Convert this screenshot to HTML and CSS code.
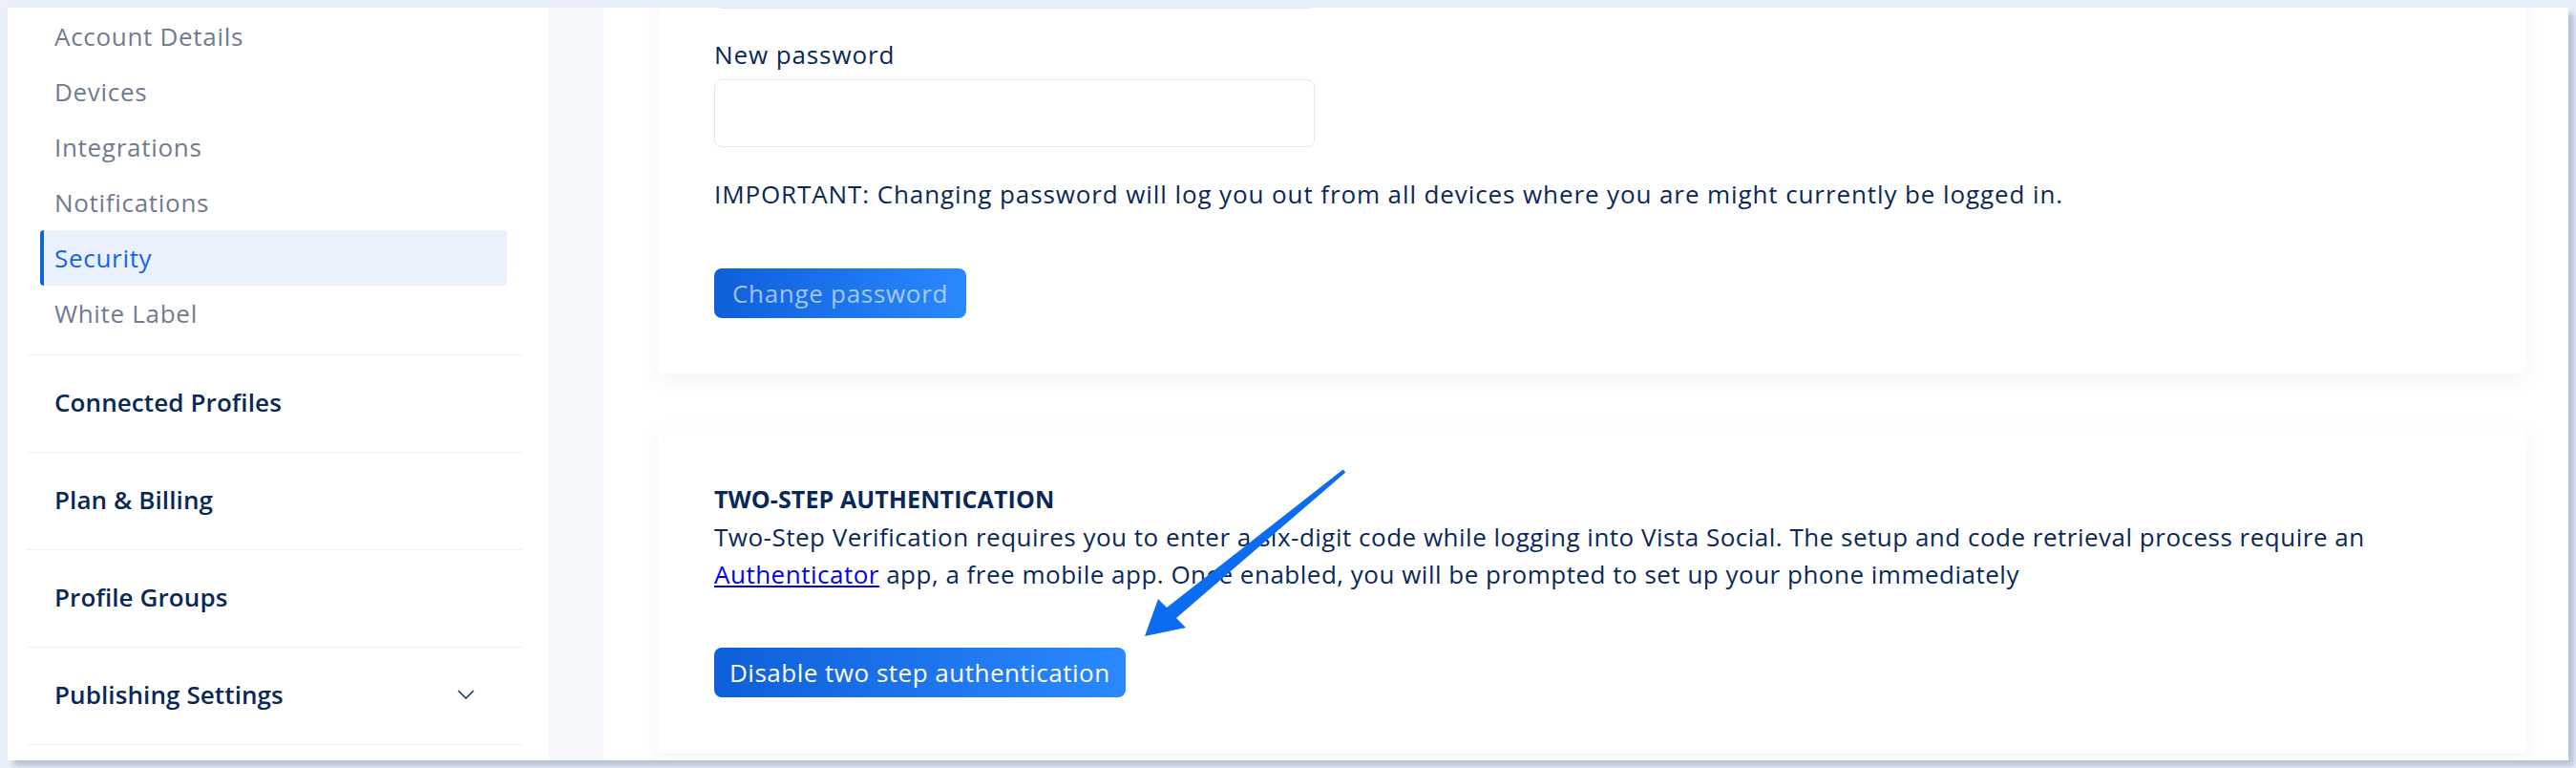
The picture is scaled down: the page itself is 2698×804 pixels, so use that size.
FILE: index.html
```html
<!DOCTYPE html>
<html lang="en">
<head>
    <meta charset="UTF-8">
    <meta name="viewport" content="width=device-width, initial-scale=1.0">
    <title>Settings - Security</title>
    <link rel="stylesheet" href="styles.css">
</head>
<body>

    <div class="window">
        <aside class="sidebar">
            <div class="submenu">
                <ul class="submenu-list">
                    <li class="submenu-item">Account Details</li>
                    <li class="submenu-item">Devices</li>
                    <li class="submenu-item">Integrations</li>
                    <li class="submenu-item">Notifications</li>
                    <li class="submenu-item active">Security</li>
                    <li class="submenu-item">White Label</li>
                </ul>
            </div>
            <div class="section">Connected Profiles</div>
            <div class="section">Plan &amp; Billing</div>
            <div class="section">Profile Groups</div>
            <div class="section">
                <span>Publishing Settings</span>
                <svg class="chevron" width="18" height="10" viewBox="0 0 18 10">
                    <path d="M1 1 L9 9 L17 1" fill="none" stroke="#1c3a72" stroke-width="1.6"/>
                </svg>
            </div>
        </aside>

        <div class="gutter"></div>

        <main class="content">
            <section class="card card-password">
                <input class="field field-cut" type="password">
                <label class="field-label" for="newPassword">New password</label>
                <input class="field" id="newPassword" type="password">
                <p class="note">IMPORTANT: Changing password will log you out from all devices where you are might currently be logged in.</p>
                <button class="btn" type="button" disabled>Change password</button>
            </section>

            <section class="card card-twostep">
                <h3 class="card-title">TWO-STEP AUTHENTICATION</h3>
                <p class="card-text">Two-Step Verification requires you to enter a six-digit code while logging into Vista Social. The setup and code retrieval process require an <a href="#">Authenticator</a> app, a free mobile app. Once enabled, you will be prompted to set up your phone immediately</p>
                <button class="btn btn-disable" type="button">Disable two step authentication</button>

                <!-- annotation arrow drawn over the card -->
                <svg class="arrow" width="740" height="230" viewBox="0 0 740 230">
                    <polygon fill="#0b6cf1" points="717.7,42.5 720.3,45.5 543,198 553,208 510,217 524,178 533,187"/>
                </svg>
            </section>
        </main>
    </div>

</body>
</html>
```

FILE: styles.css
```css
body {
    margin: 0;
    padding: 0;
    background-color: #e9f0fb;
    font-family: "Open Sans", sans-serif;
    font-size: 26px;
    letter-spacing: 0.9px;
    color: #0a2857;
    height: 804px;
    overflow: hidden;
}

.window {
    display: flex;
    margin: 8px 8px 0 8px;
    height: 788px;
    overflow: hidden;
    background-color: #fff;
    box-shadow: 6px 6px 6px rgba(90, 105, 135, 0.35);
}

/* sidebar */

.sidebar {
    width: 567px;
    flex-shrink: 0;
    background-color: #fff;
}

.submenu {
    margin: 0 28px 0 20px;
    padding: 1px 0 14px;
    border-bottom: 1px solid #eef0f3;
}

.submenu-list {
    list-style: none;
    margin: 0;
    padding: 0;
}

.submenu-item {
    display: flex;
    align-items: center;
    height: 58px;
    margin: 0 16px 0 14px;
    padding-left: 15px;
    color: #6f7b8f;
    letter-spacing: 0.7px;
    border-radius: 4px;
}

.submenu-item.active {
    padding-left: 11px;
    border-left: 4px solid #0f62e0;
    background-color: #eaf1fd;
    color: #1565e2;
}

.section {
    display: flex;
    align-items: center;
    justify-content: space-between;
    box-sizing: border-box;
    height: 102px;
    margin: 0 28px 0 20px;
    padding: 0 50px 3px 29px;
    border-bottom: 1px solid #eef0f3;
    font-weight: 600;
    letter-spacing: 0.1px;
    color: #0a2857;
}

.gutter {
    width: 57px;
    flex-shrink: 0;
    background-color: #f5f8fd;
}

/* main content */

.content {
    flex: 1;
    padding: 0 45px 0 57px;
    background-color: #fff;
}

.card {
    position: relative;
    background-color: #fff;
    border-radius: 4px;
    box-shadow: 0 6px 22px rgba(30, 45, 80, 0.06);
    padding: 40px 59px 58px;
}

.card-password {
    margin-top: -110px;
}

.card-twostep {
    margin-top: 58px;
    padding-top: 54px;
}

.field {
    display: block;
    box-sizing: border-box;
    width: 629px;
    height: 71px;
    margin: 8px 0 0;
    border: 1px solid #e4e7ec;
    border-radius: 8px;
    background-color: #fff;
}

.field-cut {
    margin-top: 0;
}

.field-label {
    display: block;
    margin-top: 30px;
    line-height: 36px;
}

.note {
    margin: 30px 0 0;
    line-height: 38px;
}

.btn {
    display: block;
    height: 52px;
    margin-top: 59px;
    padding: 0 16px;
    border: none;
    border-radius: 8px;
    background: linear-gradient(90deg, #0e5fd9, #2a89ff);
    color: #fff;
    font-family: "Open Sans", sans-serif;
    font-size: 26px;
    letter-spacing: 0.7px;
}

.btn:disabled {
    padding: 0 19px;
    color: rgba(255, 255, 255, 0.6);
}

.card-title {
    margin: 0;
    font-size: 25px;
    font-weight: 700;
    letter-spacing: 0.1px;
    line-height: 38px;
}

.card-text {
    margin: 2px 0 0;
    line-height: 39px;
    letter-spacing: 0.5px;
}

.card-text a {
    color: #0000ee;
}

.card-twostep .btn {
    margin-top: 57px;
}

.btn-disable {
    letter-spacing: 0.5px;
}

.arrow {
    position: absolute;
    left: 0;
    top: 0;
    pointer-events: none;
}
```
